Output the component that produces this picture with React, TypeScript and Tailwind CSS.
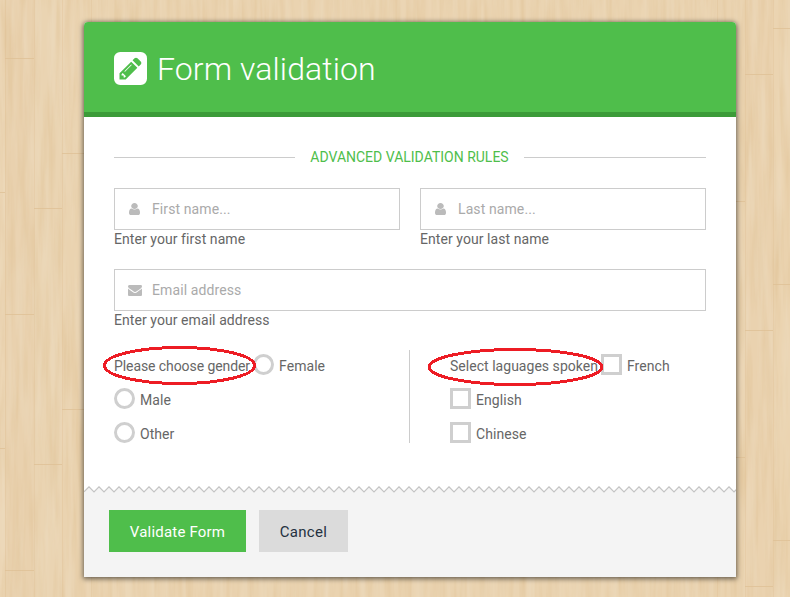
import type { ReactNode } from "react";

const PLANKS = [
  { x: -24, w: 29, joint: 192, tone: "#ecd6b5" },
  { x: 5, w: 29, joint: 58, tone: "#e9d1ae" },
  { x: 34, w: 28, joint: 208, tone: "#ead4b2" },
  { x: 62, w: 29, joint: 153, tone: "#ead3b0" },
  { x: 91, w: 626, joint: 120, tone: "#ead3b0" },
  { x: 717, w: 28, joint: 201, tone: "#ead3b0" },
  { x: 745, w: 28, joint: 74, tone: "#ead2af" },
  { x: 773, w: 28, joint: 28, tone: "#ebd4b1" },
];

function WoodFloor() {
  return (
    <svg className="absolute inset-0 h-full w-full" viewBox="0 0 790 597" aria-hidden="true">
      <defs>
        <filter id="grain" x="0" y="0" width="100%" height="100%" colorInterpolationFilters="sRGB">
          <feTurbulence type="fractalNoise" baseFrequency="0.15 0.01" numOctaves="3" seed="8" />
          <feColorMatrix values="0 0 0 0 0.87  0 0 0 0 0.75  0 0 0 0 0.57  1 0 0 0 -0.38" />
        </filter>
        <filter id="shine" x="0" y="0" width="100%" height="100%" colorInterpolationFilters="sRGB">
          <feTurbulence type="fractalNoise" baseFrequency="0.12 0.009" numOctaves="3" seed="21" />
          <feColorMatrix values="0 0 0 0 0.93  0 0 0 0 0.865  0 0 0 0 0.76  1.2 0 0 0 -0.5" />
        </filter>
      </defs>
      <rect width="790" height="597" fill="#ead3b0" />
      {PLANKS.map((p) => (
        <rect key={p.x} x={p.x} y="0" width={p.w} height="597" fill={p.tone} />
      ))}
      <rect width="790" height="597" filter="url(#grain)" />
      <rect width="790" height="597" filter="url(#shine)" />
      {PLANKS.map((p) => (
        <g key={p.x} fill="#dfc196">
          <rect x={p.x + p.w} y="0" width="1" height="597" opacity="0.35" />
          {[0, 256, 512].map((o) => (
            <rect key={o} x={p.x} y={p.joint + o} width={p.w} height="1" opacity="0.8" />
          ))}
        </g>
      ))}
    </svg>
  );
}

function PencilSquare() {
  return (
    <svg className="h-[33px] w-[33px]" viewBox="0 0 1536 1536" fill="currentColor">
      <path
        transform="translate(0 1408) scale(1 -1)"
        d="M404 428l152 -152l-52 -52h-56v96h-96v56zM818 818q14 -13 -3 -30l-291 -291q-17 -17 -30 -3q-14 13 3 30l291 291q17 17 30 3zM544 128l544 544l-288 288l-544 -544v-288h288zM1152 736l92 92q28 28 28 68t-28 68l-152 152q-28 28 -68 28t-68 -28l-92 -92zM1536 1120v-960q0 -119 -84.5 -203.5t-203.5 -84.5h-960q-119 0 -203.5 84.5t-84.5 203.5v960q0 119 84.5 203.5t203.5 84.5h960q119 0 203.5 -84.5t84.5 -203.5z"
      />
    </svg>
  );
}

function UserIcon() {
  return (
    <svg className="ml-px h-3 w-[11px]" viewBox="0 0 1280 1536" preserveAspectRatio="none" fill="currentColor">
      <path
        transform="translate(0 1408) scale(1 -1)"
        d="M1280 137q0 -109 -62.5 -187t-150.5 -78h-854q-88 0 -150.5 78t-62.5 187q0 85 8.5 160.5t31.5 152t58.5 131t94 89t134.5 34.5q131 -128 313 -128t313 128q76 0 134.5 -34.5t94 -89t58.5 -131t31.5 -152t8.5 -160.5zM1024 1024q0 -159 -112.5 -271.5t-271.5 -112.5t-271.5 112.5t-112.5 271.5t112.5 271.5t271.5 112.5t271.5 -112.5t112.5 -271.5z"
      />
    </svg>
  );
}

function EnvelopeIcon() {
  return (
    <svg className="h-[11px] w-3.5" viewBox="0 0 1792 1408" fill="currentColor">
      <path
        transform="translate(0 1280) scale(1 -1)"
        d="M1792 826v-794q0 -66 -47 -113t-113 -47h-1472q-66 0 -113 47t-47 113v794q44 -49 101 -87q362 -246 497 -345q57 -42 92.5 -65.5t94.5 -48t110 -24.5h1h1q51 0 110 24.5t94.5 48t92.5 65.5q170 123 498 345q57 39 100 87zM1792 1120q0 -79 -49 -151t-122 -123q-376 -261 -468 -325q-10 -7 -42.5 -31t-54 -38.5t-52 -32.5t-57.5 -27t-50 -9h-1h-1q-23 0 -50 9t-57.5 27t-52 32.5t-54 38.5t-42.5 31q-91 64 -262 182.5t-205 142.5q-62 42 -117 115.5t-55 136.5q0 78 41.5 130t118.5 52h1472q65 0 112.5 -47t47.5 -113z"
      />
    </svg>
  );
}

function Field({ icon, placeholder, help }: { icon: ReactNode; placeholder: string; help: string }) {
  return (
    <label className="block flex-1">
      <span className="flex h-[42px] items-center border border-[#cccccc] bg-white pl-[13px] text-[#bbbbbb]">
        <span className="w-6 shrink-0">{icon}</span>
        <input
          className="min-w-0 flex-1 text-sm tracking-[0.1px] outline-none placeholder:text-[#aaaaaa]"
          placeholder={placeholder}
        />
      </span>
      <span className="block h-[19px] leading-[18px] tracking-[0.07px]">{help}</span>
    </label>
  );
}

function Choice({ label, round }: { label: string; round?: boolean }) {
  return (
    <label className="flex items-center tracking-[0.06px]">
      <span
        className={
          round
            ? "mb-[3px] mr-[5px] h-[21px] w-[21px] rounded-full border-[3px] border-[#cfcfcf]"
            : "mb-[3px] mr-[5px] h-[21px] w-[21px] border-[3px] border-[#cfcfcf]"
        }
      />
      {label}
    </label>
  );
}

function ChoiceGroup({ title, options, round }: { title: string; options: string[]; round?: boolean }) {
  return (
    <div>
      <div className="flex h-[34px] items-center">
        <span className={round ? "w-[139px] whitespace-nowrap tracking-[-0.08px]" : "w-[151px] whitespace-nowrap tracking-[0.03px]"}>
          {title}
        </span>
        <Choice label={options[0]} round={round} />
      </div>
      {options.slice(1).map((o) => (
        <div key={o} className="flex h-[34px] items-center">
          <Choice label={o} round={round} />
        </div>
      ))}
    </div>
  );
}

function ZigZag() {
  const points = Array.from({ length: 132 }, (_, i) => `${i * 5},${i % 2 ? 0.8 : 5.8}`).join(" ");
  return (
    <svg className="block h-2 w-full" viewBox="0 0 652 8">
      <polygon points={`0,8 ${points} 655,8`} fill="#f4f4f4" />
      <polyline points={points} fill="none" stroke="#c4c4c4" strokeWidth="1.2" />
    </svg>
  );
}

export default function App() {
  return (
    <main className="relative h-[597px] w-[790px] overflow-hidden font-['Roboto',sans-serif] text-sm text-[#666666]">
      <WoodFloor />
      <form className="relative ml-[84px] mt-[22px] h-[555px] w-[652px] rounded-t-[4px] bg-white shadow-[0_1px_5px_1px_rgba(0,0,0,0.55)]">
        <header className="flex h-[95px] items-center rounded-t-[4px] border-b-[5px] border-[#3c9b39] bg-[#4fbe4b] pl-[30px] pt-[3px] text-white">
          <PencilSquare />
          <h1 className="ml-[10px] text-[32px] font-light leading-none tracking-[0.1px]">Form validation</h1>
        </header>

        <section className="h-[369px] px-[30px] pt-[31px]">
          <div className="mb-[21px] flex h-[19px] items-center">
            <span className="h-px w-[181px] bg-[#cccccc]" />
            <h2 className="flex-1 pb-0.5 text-center text-sm text-[#4fbe4b]">ADVANCED VALIDATION RULES</h2>
            <span className="h-px w-[182px] bg-[#cccccc]" />
          </div>
          <div className="mb-5 flex gap-5">
            <Field icon={<UserIcon />} placeholder="First name..." help="Enter your first name" />
            <Field icon={<UserIcon />} placeholder="Last name..." help="Enter your last name" />
          </div>
          <div className="flex">
            <Field icon={<EnvelopeIcon />} placeholder="Email address" help="Enter your email address" />
          </div>
          <div className="mt-[19px] flex">
            <div className="w-[295px]">
              <ChoiceGroup title="Please choose gender" options={["Female", "Male", "Other"]} round />
            </div>
            <div className="mt-px h-[93px] w-px bg-[#cccccc]" />
            <div className="pl-10">
              <ChoiceGroup title="Select laguages spoken" options={["French", "English", "Chinese"]} />
            </div>
          </div>
        </section>

        <ZigZag />
        <footer className="flex h-[83px] gap-[13px] bg-[#f4f4f4] pl-[25px] pt-4">
          <button type="button" className="h-[42px] w-[137px] bg-[#4fbe4b] pt-[3px] text-[15px] tracking-[0.2px] text-white">
            Validate Form
          </button>
          <button type="button" className="h-[42px] w-[89px] bg-[#dbdbdb] pt-[3px] text-[15px] tracking-[0.3px] text-[#243140]">
            Cancel
          </button>
        </footer>
      </form>

      <svg className="pointer-events-none absolute inset-0 h-full w-full" viewBox="0 0 790 597">
        <g fill="none" stroke="#ed1c24" strokeWidth="3" shapeRendering="crispEdges">
          <ellipse cx="179.5" cy="365.5" rx="75" ry="18" />
          <ellipse cx="515.5" cy="367" rx="86.5" ry="17.5" />
        </g>
      </svg>
    </main>
  );
}
